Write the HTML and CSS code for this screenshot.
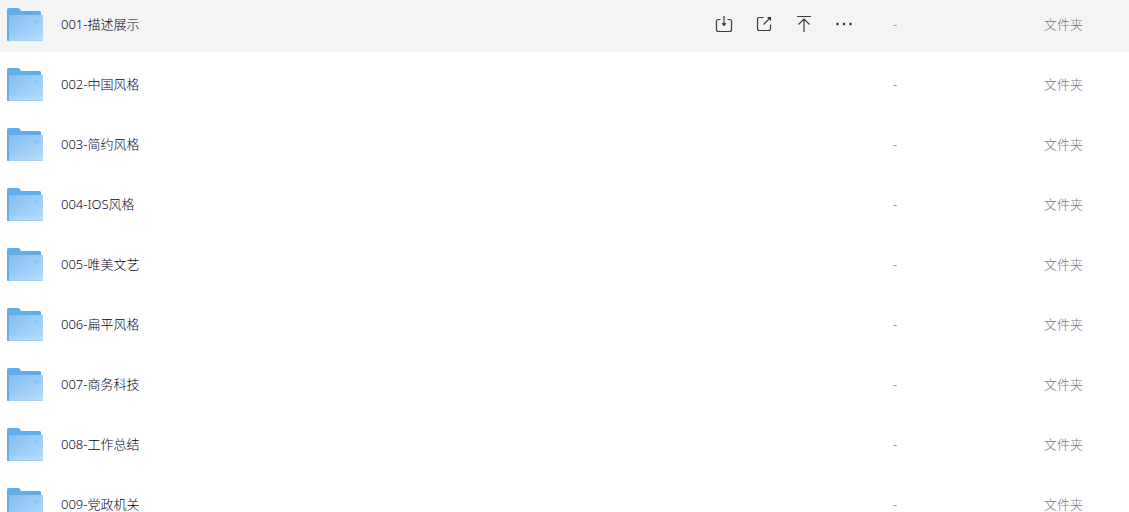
FILE: index.html
```html
<!DOCTYPE html>
<html lang="zh-CN">
<head>
<meta charset="utf-8">
<meta name="viewport" content="width=device-width, initial-scale=1">
<title>文件列表</title>
<link rel="stylesheet" href="styles.css">
</head>
<body>
<!-- shared folder icon -->
<svg class="defs" width="0" height="0" aria-hidden="true">
<defs>
<linearGradient id="front" x1="0" y1="0" x2="1" y2="1">
<stop offset="0" stop-color="#84bff1" />
<stop offset="1" stop-color="#b3dafd" />
</linearGradient>
<symbol id="folder" viewBox="0 0 36 33">
<path fill="#61ade9" d="M0 1.5Q0 0 1.500 0H11Q12.300 0 13 1.200L14 3H32.500Q34 3 34 4.500V12H4V33H1Q0 33 0 32Z" />
<path fill="url(#front)" d="M2 8Q2 7 3 7H35Q36 7 36 8V32Q36 33 35 33H2Z" />
<path fill="#c6e2fd" fill-opacity=".25" d="M2 28H36V32Q36 33 35 33H2Z" />
<path fill="#a5d1f8" d="M2 32H36Q36 33 35 33H2Z" />
<path fill="#84bff1" d="M27 12h5v1h-5zM27 14h5v1h-5z" />
</symbol>
</defs>
</svg>
<table class="files">
<colgroup>
<col>
<col class="col-size">
<col class="col-type">
</colgroup>
<tbody>
<tr class="active">
<td>
<div class="name">
<svg class="folder"><use href="#folder" /></svg>
<span>001-描述展示</span>
<div class="actions">
<button type="button" title="保存"><svg viewBox="0 0 18 18"><path d="M5.500 4.500H3Q1.500 4.500 1.500 6V14.500Q1.500 16.500 3.500 16.500H14.500Q16.500 16.500 16.500 14.500V6Q16.500 4.500 15 4.500H12.500M9 1V9" /><path class="solid" d="M6.500 8.300H11.500L9 11.300Z" /></svg></button>
<button type="button" title="分享"><svg viewBox="0 0 18 18"><path d="M8.500 2.500H4.500Q2.500 2.500 2.500 4.500V13.500Q2.500 15.500 4.500 15.500H13.500Q15.500 15.500 15.500 13.500V9.500M8.500 9.500L14 4" /><path class="solid" d="M12 2H16V6Z" /></svg></button>
<button type="button" title="置顶"><svg viewBox="0 0 18 18"><path d="M2 1.500H16M9 4V17M3.500 9.500L9 4L14.500 9.500" /></svg></button>
<button type="button" title="更多"><svg viewBox="0 0 18 18"><g class="solid"><circle cx="2.500" cy="9" r="1.200" /><circle cx="9" cy="9" r="1.200" /><circle cx="15.500" cy="9" r="1.200" /></g></svg></button>
</div>
</div>
</td>
<td>-</td>
<td>文件夹</td>
</tr>
<tr>
<td><div class="name"><svg class="folder"><use href="#folder" /></svg><span>002-中国风格</span></div></td>
<td>-</td>
<td>文件夹</td>
</tr>
<tr>
<td><div class="name"><svg class="folder"><use href="#folder" /></svg><span>003-简约风格</span></div></td>
<td>-</td>
<td>文件夹</td>
</tr>
<tr>
<td><div class="name"><svg class="folder"><use href="#folder" /></svg><span>004-IOS风格</span></div></td>
<td>-</td>
<td>文件夹</td>
</tr>
<tr>
<td><div class="name"><svg class="folder"><use href="#folder" /></svg><span>005-唯美文艺</span></div></td>
<td>-</td>
<td>文件夹</td>
</tr>
<tr>
<td><div class="name"><svg class="folder"><use href="#folder" /></svg><span>006-扁平风格</span></div></td>
<td>-</td>
<td>文件夹</td>
</tr>
<tr>
<td><div class="name"><svg class="folder"><use href="#folder" /></svg><span>007-商务科技</span></div></td>
<td>-</td>
<td>文件夹</td>
</tr>
<tr>
<td><div class="name"><svg class="folder"><use href="#folder" /></svg><span>008-工作总结</span></div></td>
<td>-</td>
<td>文件夹</td>
</tr>
<tr>
<td><div class="name"><svg class="folder"><use href="#folder" /></svg><span>009-党政机关</span></div></td>
<td>-</td>
<td>文件夹</td>
</tr>
</tbody>
</table>
</body>
</html>
```

FILE: styles.css
```css
html {
 overflow: hidden;
}
body {
 background: #fff;
 color: #03081a;
 font: 13px/20px "Noto Sans", "Noto Sans CJK SC", sans-serif;
 font-weight: 300;
 margin: 0;
}
.defs {
 position: absolute;
}
/* the list is scrolled a little past its first row's top edge */
.files {
 border-spacing: 0 4px;
 margin-top: -8px;
 table-layout: fixed;
 width: 100%;
}
.col-size {
 width: 151px;
}
.col-type {
 width: 85px;
}
.files td {
 box-sizing: border-box;
 color: #747482;
 height: 56px;
 padding: 0;
}
.files .active td {
 background: #f4f4f4;
}
.name {
 align-items: center;
 color: #03031f;
 display: flex;
 gap: 18px;
 padding: 0 29px 0 7px;
}
.folder {
 flex: none;
 height: 33px;
 width: 36px;
}
.actions {
 display: flex;
 margin-left: auto;
}
.actions button {
 background: none;
 border: 0;
 cursor: pointer;
 height: 32px;
 padding: 0;
 width: 40px;
}
.actions svg {
 display: block;
 fill: none;
 height: 18px;
 margin: 0 auto;
 stroke: #3c3c46;
 stroke-width: 1.2;
 width: 18px;
}
.actions .solid {
 fill: #25252f;
 stroke: none;
}
```
